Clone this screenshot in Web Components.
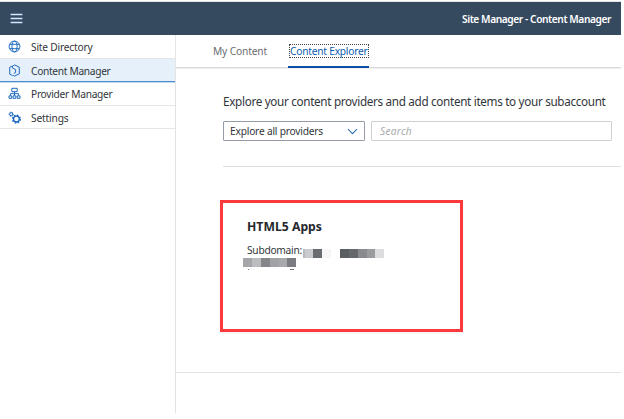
<!DOCTYPE html>
<html lang="en">
<head>
<meta charset="utf-8">
<title>Site Manager - Content Manager</title>
<style>
body{margin:0;background:#fff;font-family:"Noto Sans","Open Sans",sans-serif;color:#32363a}
</style>
</head>
<body>
<site-manager></site-manager>
<script>
// Single-line label whose tracking is adjusted to its width attribute.
class FitLabel extends HTMLElement{
  connectedCallback(){
    const root=this.attachShadow({mode:'open'});
    root.innerHTML='<style>:host{display:inline-block;white-space:nowrap;line-height:16px}span{display:inline-block}</style><span></span>';
    const s=root.querySelector('span');s.textContent=this.getAttribute('text');
    const target=+this.getAttribute('width');
    s.style.letterSpacing=(target-s.getBoundingClientRect().width)/s.textContent.length+'px';
  }
}
customElements.define('fit-label',FitLabel);

const icons={
globe:'<circle cx="6.5" cy="6.5" r="5.4"/><ellipse cx="6.5" cy="6.5" rx="2.6" ry="5.4"/><path d="M1.7 4.3h9.6M1.7 8.7h9.6"/>',
content:'<path d="M4.6 11.6 1.7 10.2V3.3L4.4 1.9M5.2 1.6 6.8 1l4.5 2.2v6.6L6.6 12l-1.5-.6M4.4 2v2L7.6 5.6v3L5.8 9.4"/>',
tree:'<path d="M3.8 1.3h5.4v3.4H3.8zM6.5 4.7v4M2.4 8.7V6.7h8.2v2M1 8.9h2.8v2.4H1zM5.1 8.9h2.8v2.4H5.1zM9.2 8.9H12v2.4H9.2z"/>',
gears:'<circle cx="3.2" cy="3.2" r="1.5"/><circle cx="3.2" cy="3.2" r="2.1" stroke-dasharray=".9 .75"/><circle cx="8.4" cy="8.1" r="2.9" stroke-width="1.3"/><circle cx="8.4" cy="8.1" r="3.9" stroke-width="1.3" stroke-dasharray="1.6 1.46"/>',
menu:'<path d="M.6 1.5h11.8M.6 5.5h11.8M.6 9.5h11.8"/>',
chevron:'<path d="m2 4.2 4.5 4.5L11 4.2"/>'};
class UiIcon extends HTMLElement{
  connectedCallback(){
    this.attachShadow({mode:'open'}).innerHTML='<style>:host{display:block;width:13px;height:13px;flex:none}svg{display:block;fill:none;stroke:currentColor;stroke-width:var(--stroke,.95)}</style><svg width="13" height="13" viewBox="0 0 13 13">'+icons[this.getAttribute('name')]+'</svg>';
  }
}
customElements.define('ui-icon',UiIcon);

class ShellBar extends HTMLElement{
  connectedCallback(){
    this.attachShadow({mode:'open'}).innerHTML=`<style>
    :host{display:flex;box-sizing:border-box;height:33px;background:#354a5f;color:#fff;align-items:center;justify-content:space-between;padding:0 10px;font-size:10.2px;font-weight:600}
    ui-icon{color:#d1e8ff;--stroke:1.4;margin-top:2px}fit-label{margin-top:1px}</style>
    <ui-icon name="menu"></ui-icon><fit-label text="Site Manager - Content Manager" width="149"></fit-label>`;
  }
}
customElements.define('shell-bar',ShellBar);

class NavItem extends HTMLElement{
  connectedCallback(){
    this.attachShadow({mode:'open'}).innerHTML=`<style>
    :host{display:flex;box-sizing:border-box;height:23.6px;align-items:center;padding:1px 0 0 8px;gap:10px;border-bottom:1px solid #e5e5e5;font-size:10.2px}
    :host([selected]){background:#e5f0fa;border-bottom-color:#4f8ccc;box-shadow:0 1px #c3d9f0}
    :host([selected]) fit-label{margin-top:1px}
    ui-icon{color:#1463bd}</style>
    <ui-icon name="${this.getAttribute('icon')}"></ui-icon><fit-label text="${this.getAttribute('text')}" width="${this.getAttribute('width')}"></fit-label>`;
  }
}
customElements.define('nav-item',NavItem);

class TabStrip extends HTMLElement{
  connectedCallback(){
    this.attachShadow({mode:'open'}).innerHTML=`<style>
    :host{display:flex;box-sizing:border-box;height:33px;border-bottom:1px solid #d9d9d9;box-shadow:0 1px 1px #f0f0f0;padding-left:37px;gap:21px;font-size:10.2px;color:#6a6d70}
    div{box-sizing:border-box;height:33px;line-height:0;padding-top:8px}
    .on{color:#0a5bb0;border-bottom:2px solid #0a4fa8;padding:9px .5px 0 1px}
    .on fit-label{border:1px dotted #444;height:12px;line-height:12px}
    </style><div><fit-label text="My Content" width="54"></fit-label></div><div class="on"><fit-label text="Content Explorer" width="77.5"></fit-label></div>`;
  }
}
customElements.define('tab-strip',TabStrip);

class FilterBar extends HTMLElement{
  connectedCallback(){
    this.attachShadow({mode:'open'}).innerHTML=`<style>
    :host{display:flex;gap:6px;height:20px;font-size:10.2px}
    div{box-sizing:border-box;height:20px;display:flex;align-items:center;border:1px solid #959ca5;border-radius:1px;padding:0 5px 0 6px}
    .select{width:142px;justify-content:space-between;color:#32363a}
    .search{width:241px;border-color:#cfd1d3;color:#a8abae;font-style:italic;padding-left:8px}
    ui-icon{color:#3672b4;--stroke:1.1}</style>
    <div class="select"><fit-label text="Explore all providers" width="93"></fit-label><ui-icon name="chevron"></ui-icon></div>
    <div class="search"><fit-label text="Search" width="32"></fit-label></div>`;
  }
}
customElements.define('filter-bar',FilterBar);

// Row of grey tiles that masks a value; "0" leaves an empty gap.
class RedactedValue extends HTMLElement{
  connectedCallback(){
    const cells=this.getAttribute('cells').split(' ').map(c=>{const [w,k]=c.split(':');return `<i style="width:${w}px;background:${k==='0'?'none':'#'+k}"></i>`}).join('');
    this.attachShadow({mode:'open'}).innerHTML='<style>:host{display:flex;height:9px}i{flex:none}</style>'+cells;
  }
}
customElements.define('redacted-value',RedactedValue);

class ProviderCard extends HTMLElement{
  connectedCallback(){
    this.attachShadow({mode:'open'}).innerHTML=`<style>
    :host{display:block;box-sizing:border-box;width:243px;height:132px;border:3px solid #fc393c;padding:16px 0 0 24px;box-shadow:0 1px 2px #eee}
    .title{font-size:12.2px;font-weight:700;height:20px;color:#24282c;line-height:0}
    .row{display:flex;height:18px;font-size:10.2px;margin-top:4px;align-items:flex-start}
    .row redacted-value{margin:6px 0 0 1px}
    .row fit-label{margin-top:-1px}
    .second{margin-left:-4px;margin-top:-3px}
    .bits{display:flex;gap:41px;margin-top:2px;padding-left:1px}
    .bits i{width:1px;height:1px;background:#777}.bits i+i{width:4px}
    </style><div class="title"><fit-label text="HTML5 Apps" width="75"></fit-label></div>
    <div class="row"><fit-label text="Subdomain:" width="55"></fit-label>
    <redacted-value cells="2:b9babd 8:cacbce 9:696c71 9:f6f6f6 9:0 9:5a5d61 9:66696c 9:898a8f 8:9b9ca0 9:dddddf"></redacted-value></div>
    <redacted-value class="second" cells="9:a5a6a9 9:bbbcbe 9:85868a 9:a1a2a5 8:a8a9ac 9:7b7c81"></redacted-value>
    <div class="bits"><i></i><i></i></div>`;
  }
}
customElements.define('provider-card',ProviderCard);

class SiteManager extends HTMLElement{
  connectedCallback(){
    this.attachShadow({mode:'open'}).innerHTML=`<style>
    :host{display:block;box-sizing:border-box;width:621px;height:413px;border-top:1px solid #fff;padding-top:1px;background:linear-gradient(#e2e4e6 0 1px,#fff 1px)}
    .body{display:grid;grid-template-columns:176px 445px;height:378px}
    nav{border-right:1px solid #e2e2e2}
    main{display:flex;flex-direction:column}
    .content{padding:25px 0 0 47px}
    .intro{height:28px;font-size:11.7px;line-height:0}
    hr{border:0;height:1px;background:#dedfe0;margin:25px 0 33px}
    provider-card{margin-left:-3px}
    footer{margin-top:auto;height:40px;border-top:1px solid #e3e3e3}
    </style><shell-bar></shell-bar><div class="body"><nav>
    <nav-item icon="globe" text="Site Directory" width="61.5"></nav-item>
    <nav-item selected icon="content" text="Content Manager" width="79.5"></nav-item>
    <nav-item icon="tree" text="Provider Manager" width="81.5"></nav-item>
    <nav-item icon="gears" text="Settings" width="37.5"></nav-item>
    </nav><main><tab-strip></tab-strip><div class="content"><div class="intro"><fit-label text="Explore your content providers and add content items to your subaccount" width="382.5"></fit-label></div>
    <filter-bar></filter-bar><hr><provider-card></provider-card></div><footer></footer></main></div>`;
  }
}
customElements.define('site-manager',SiteManager);
</script>
</body>
</html>
